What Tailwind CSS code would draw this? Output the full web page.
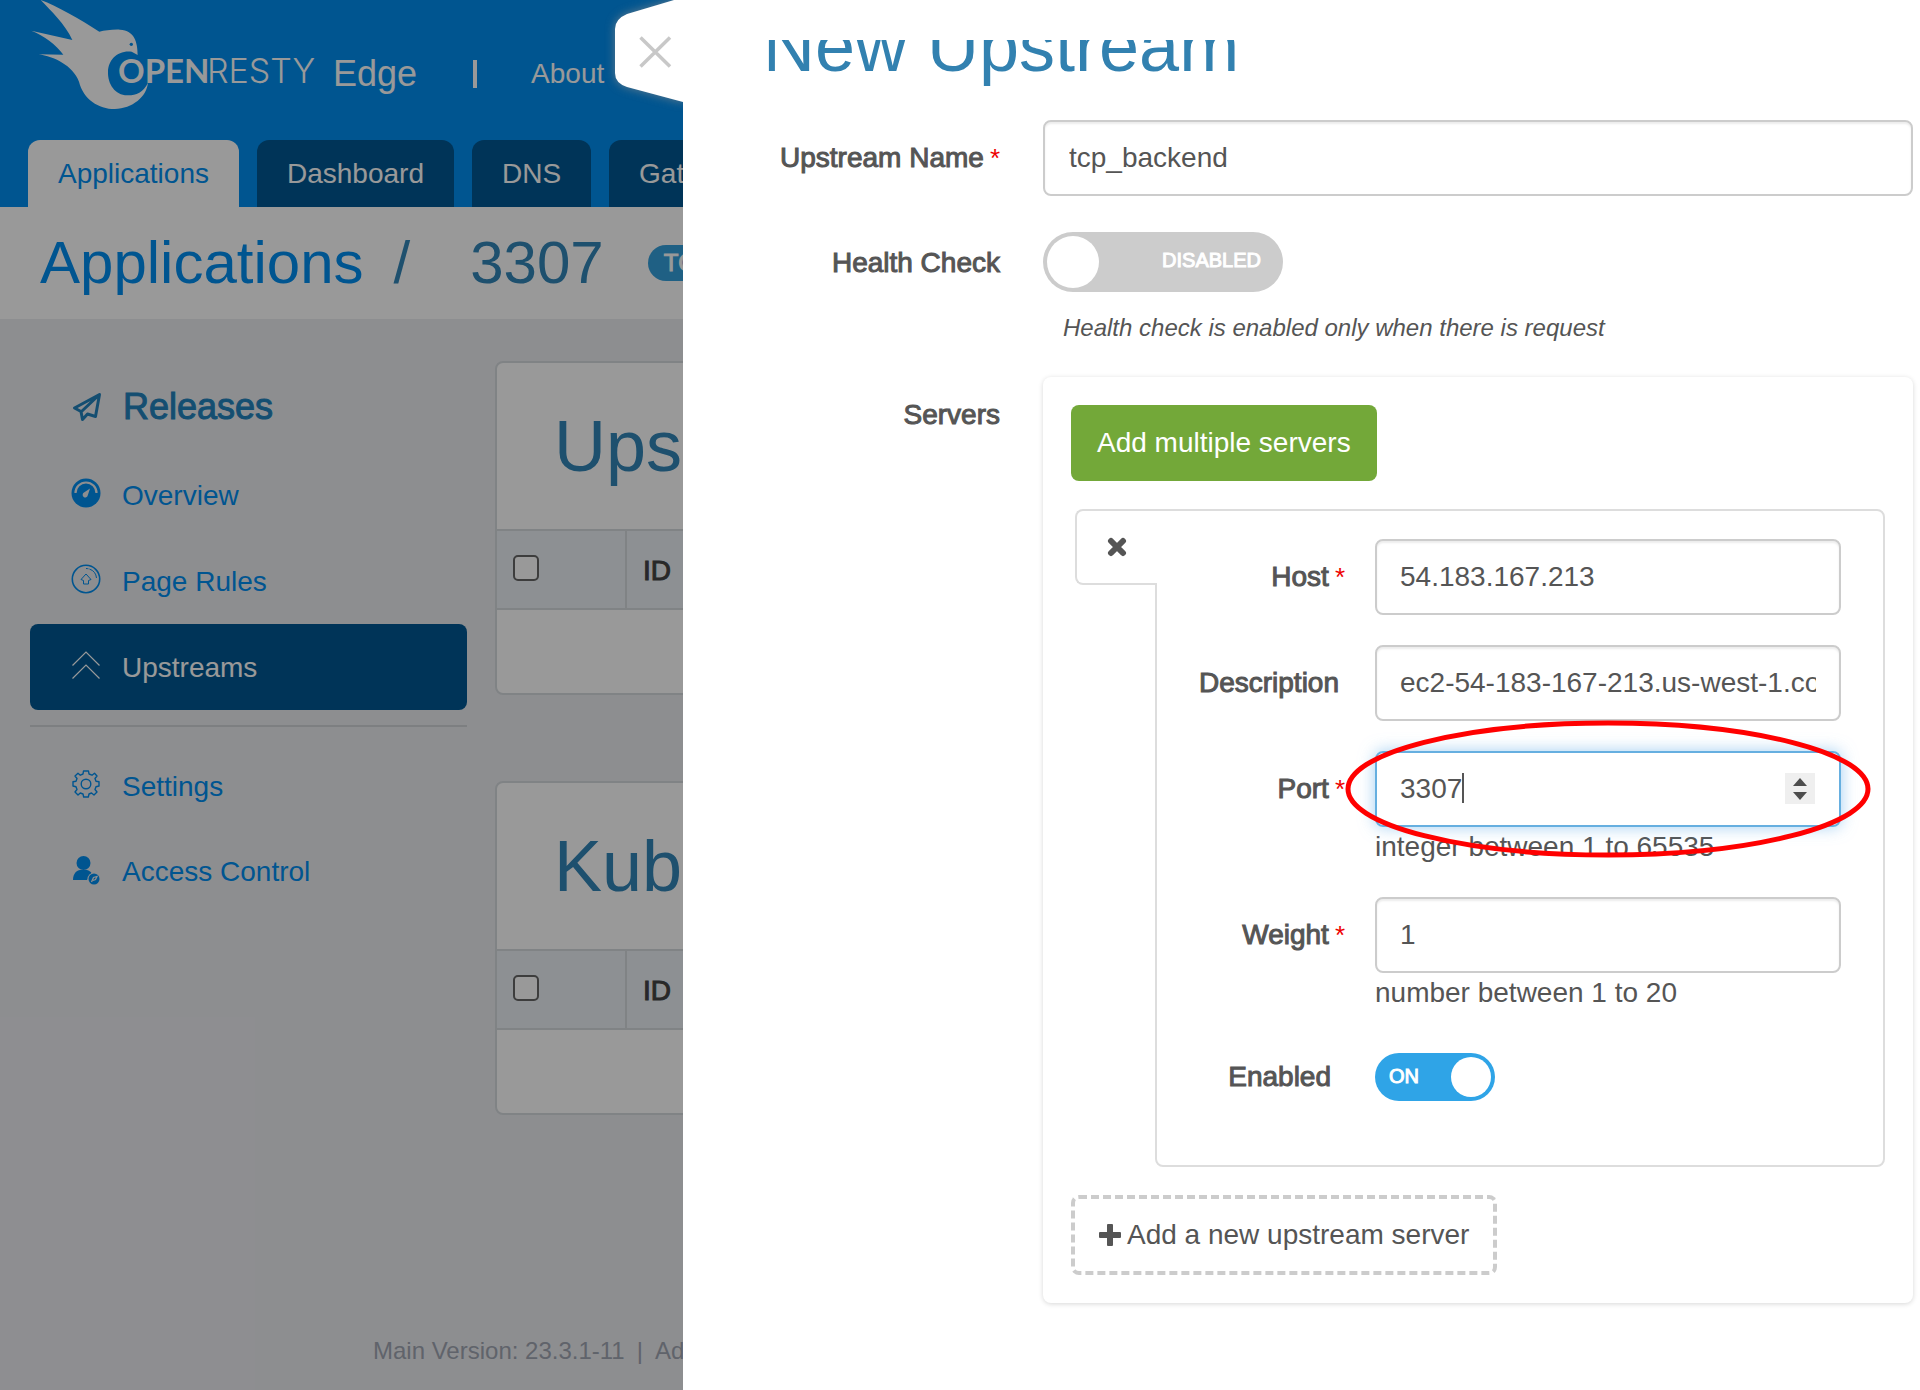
<!DOCTYPE html>
<html lang="en">
<head>
    <meta charset="UTF-8">
    <meta name="viewport" content="width=device-width, initial-scale=1.0">
    <title>OpenResty Edge - New Upstream</title>
    <script src="https://cdn.jsdelivr.net/npm/@tailwindcss/browser@4"></script>
</head>
<body class="relative min-h-screen overflow-x-hidden bg-[#ecedf1] font-['Liberation_Sans',Arial,sans-serif] text-[28px] leading-8 text-[#555]">

    <!-- Application page -->
    <div class="flex min-h-screen flex-col">

        <header class="bg-[#008ef0] text-white">
            <div class="flex h-[140px] pl-5">
                <svg class="h-[130px] w-[310px] shrink-0" viewBox="0 0 310 130" role="img" aria-label="OpenResty">
                    <g transform="scale(.33333)">
                        <path fill="#fff" d="M62 0C92 32 135 72 157 120L34 92C72 106 110 136 130 164L56 163C102 170 158 196 177 245C190 298 236 327 284 327C338 325 380 290 384 248C370 278 345 287 322 286C285 285 263 252 264 215C265 180 292 150 335 155L353 165C353 128 344 91 300 89C276 88 254 92 238 95C180 58 112 18 62 0Z"/>
                        <circle cx="334" cy="133" r="5" fill="#008ef0"/>
                    </g>
                    <text x="98" y="83" fill="#fff" class="font-['Lato',sans-serif] text-[33px] font-bold">OPEN</text>
                    <text x="187" y="83" fill="#fff" class="font-['Inter',sans-serif] text-[34px] font-light">RESTY</text>
                </svg>
                <div class="flex items-center pt-2">
                    <span class="ml-[3px] text-[36px] leading-10">Edge</span>
                    <span class="ml-[56px] h-7 w-1 bg-white"></span>
                    <a href="#" class="ml-[54px]">About</a>
                </div>
            </div>
            <nav class="flex gap-[18px] overflow-hidden pl-7">
                <a href="#" class="flex h-[67px] items-center rounded-t-xl bg-white px-[30px] text-[#008ef0]">Applications</a>
                <a href="#" class="flex h-[67px] items-center rounded-t-xl bg-[#005893] px-[30px]">Dashboard</a>
                <a href="#" class="flex h-[67px] items-center rounded-t-xl bg-[#005893] px-[30px]">DNS</a>
                <a href="#" class="flex h-[67px] items-center rounded-t-xl bg-[#005893] px-[30px]">Gateway</a>
            </nav>
        </header>

        <div class="flex h-[112px] items-center bg-white pl-10 text-[60px] leading-[64px] text-[#3285b7]">
            <a href="#" class="text-[#008ef0]">Applications</a>
            <span class="ml-[30px]">/</span>
            <span class="ml-[60px]">3307</span>
            <span class="ml-[44px] rounded-full bg-[#35a0dc] px-4 text-[24px] leading-9 text-white [-webkit-text-stroke:1px_currentColor]">TCP</span>
        </div>

        <div class="flex flex-1 gap-7 pr-[30px] pl-[30px]">
            <!-- Side menu -->
            <aside class="w-[437px] shrink-0 pt-[42px] text-[#008ef0]">
                <a href="#" class="flex h-[91px] items-center gap-[21px] pl-[42px] text-[36px] text-[#2283bd] [-webkit-text-stroke:1px_currentColor]">
                    <svg class="h-[30px] w-[30px]" viewBox="0 0 30 30" fill="none" stroke="currentColor" stroke-width="3" stroke-linejoin="round" aria-hidden="true"><path d="M27.500 2.500L2.500 16L9 19.500L10.500 27.500L15.500 22L23.500 24.500ZM27.500 2.500L9.500 19.500"/></svg>
                    <span>Releases</span>
                </a>
                <a href="#" class="flex h-[86px] items-center gap-[21px] pt-0.5 pl-[41px]">
                    <svg class="mb-1.5 h-[30px] w-[30px]" viewBox="0 0 30 30" aria-hidden="true"><circle cx="15" cy="15" r="14.500" fill="currentColor"/><path d="M4.500 15A10.500 10.500 0 0 1 25.500 15" fill="none" stroke="#ecedf1" stroke-width="2.200"/><path d="M19 10.500L16.800 17.200A2.600 2.600 0 1 1 13 14.500Z" fill="#ecedf1"/></svg>
                    <span>Overview</span>
                </a>
                <a href="#" class="flex h-[86px] items-center gap-[21px] pt-0.5 pl-[41px]">
                    <svg class="mb-1.5 h-[30px] w-[30px]" viewBox="0 0 30 30" fill="none" stroke="currentColor" aria-hidden="true"><circle cx="15" cy="15" r="13.700" stroke-width="1.600"/><path d="M15 4.500A10.500 10.500 0 0 1 25.500 14" stroke-dasharray="2.500 1 20" /><path d="M15 10L20 15.500L17.500 16.500V20H12.500V16.500L10 15.500Z" stroke-linejoin="round"/></svg>
                    <span>Page Rules</span>
                </a>
                <a href="#" class="flex h-[86px] items-center gap-[21px] rounded-lg bg-[#005893] pt-0.5 pl-[41px] text-white">
                    <svg class="mb-1.5 h-[30px] w-[30px]" viewBox="0 0 30 30" fill="none" stroke="currentColor" stroke-width="1.200" aria-hidden="true"><path d="M1.500 15.500L15 2L28.500 15.500M1.500 28.500L15 15L28.500 28.500"/></svg>
                    <span>Upstreams</span>
                </a>
                <hr class="mt-[15px] mb-4 border-t-2 border-[#d0d4d8]">
                <a href="#" class="flex h-[86px] items-center gap-[21px] pt-0.5 pl-[41px]">
                    <svg class="mb-1.5 h-[30px] w-[30px]" viewBox="0 0 30 30" fill="none" stroke="currentColor" stroke-width="1.400" stroke-linejoin="round" aria-hidden="true"><path d="M12.500 2H17.500L18 5L21 6.200L23.500 4.300L26 7L24 9.500L25 12.300L28 12.800V17L25 17.700L24 20.500L26 23L23 26L20.500 24L18 25L17.300 28H12.700L12 25L9.300 24L7 26L4 23L6 20.500L5 17.700L2 17V12.800L5 12.300L6 9.500L4 7L7 4.300L9.300 6.200L12 5Z"/><circle cx="15" cy="15" r="4.800"/></svg>
                    <span>Settings</span>
                </a>
                <a href="#" class="flex h-[86px] items-center gap-[21px] pl-[41px]">
                    <svg class="mb-1 h-[30px] w-[30px]" viewBox="0 0 30 30" aria-hidden="true"><circle cx="12.500" cy="8" r="7" fill="currentColor"/><path d="M2 25C2 18 6 15.500 9 15H16C18 15.500 19.500 16.500 20.500 18L16 25Z" fill="currentColor"/><circle cx="23" cy="24" r="6.500" fill="#ecedf1"/><circle cx="23" cy="24" r="5.500" fill="currentColor"/><path d="M20.500 27L22.500 22.500L26 21.500L24.500 24.500L22 25.500" fill="none" stroke="#ecedf1" stroke-width="1.300"/></svg>
                    <span>Access Control</span>
                </a>
            </aside>

            <!-- Upstream tables -->
            <main class="flex min-w-0 flex-1 flex-col gap-[86px] pt-[42px]">
                <section class="overflow-hidden rounded-lg border-2 border-[#d5dade] bg-white">
                    <h2 class="flex h-[166px] items-center pl-[57px] text-[72px] leading-[72px] text-[#3285b7]">Upstreams</h2>
                    <table class="w-full border-collapse text-left">
                        <thead>
                            <tr class="h-[79px] border-y-2 border-[#d5dade] bg-[#ebf1f5] text-[#444]">
                                <th class="w-[129px] border-r-2 border-[#d5dade] pb-1 pl-4"><input type="checkbox" aria-label="Select all upstreams" class="block h-[26px] w-[26px] appearance-none rounded-[5px] border-2 border-[#666] bg-white"></th>
                                <th class="px-4 pt-0.5 font-normal [-webkit-text-stroke:1px_currentColor]">ID</th>
                            </tr>
                        </thead>
                        <tbody><tr class="h-[84px]"><td colspan="2"></td></tr></tbody>
                    </table>
                </section>
                <section class="overflow-hidden rounded-lg border-2 border-[#d5dade] bg-white">
                    <h2 class="flex h-[166px] items-center pl-[57px] text-[72px] leading-[72px] text-[#3285b7]">Kubernetes</h2>
                    <table class="w-full border-collapse text-left">
                        <thead>
                            <tr class="h-[79px] border-y-2 border-[#d5dade] bg-[#ebf1f5] text-[#444]">
                                <th class="w-[129px] border-r-2 border-[#d5dade] pb-1 pl-4"><input type="checkbox" aria-label="Select all Kubernetes upstreams" class="block h-[26px] w-[26px] appearance-none rounded-[5px] border-2 border-[#666] bg-white"></th>
                                <th class="px-4 pt-0.5 font-normal [-webkit-text-stroke:1px_currentColor]">ID</th>
                            </tr>
                        </thead>
                        <tbody><tr class="h-[84px]"><td colspan="2"></td></tr></tbody>
                    </table>
                </section>
            </main>
        </div>

        <footer class="flex gap-3 pb-[23px] pl-[373px] text-[24px] leading-8 text-[#a0a6b2]">
            <span>Main Version: 23.3.1-11</span><span>|</span><span>Admin Version: 23.3.1-11</span>
        </footer>
    </div>

    <!-- Backdrop -->
    <div class="absolute inset-0 bg-black/40"></div>

    <!-- Drawer -->
    <div role="dialog" aria-label="New Upstream" class="absolute inset-y-0 right-0 left-[683px] bg-white pt-10">
        <button type="button" aria-label="Close" class="absolute top-0 -left-[68px] h-[104px] w-[70px] [clip-path:inset(-20px_2px_-20px_-20px)]">
            <svg class="h-[104px] w-[70px] overflow-visible drop-shadow-[0_0_5px_rgba(140,140,140,0.7)]" viewBox="0 0 70 104" aria-hidden="true"><path fill="#fff" d="M70 -4L59 0L12 14Q0 19 0 29V73Q0 83 12 87L68 102H70Z"/><path d="M25.500 37.500L55 66.500M55 37.500L25.500 66.500" stroke="#c8c8c8" stroke-width="3.500"/></svg>
        </button>

        <form class="overflow-hidden pr-[7px] pb-20">
            <h1 class="-mt-[30px] mb-[38px] pl-20 text-[72px] leading-[72px] text-[#3281b0]">New Upstream</h1>

            <div class="flex gap-[43px]">
                <label for="upstream-name" class="flex h-[76px] w-[317px] shrink-0 items-center justify-end gap-1.5 [-webkit-text-stroke:1px_currentColor]">Upstream Name <span class="text-[26px] text-[#e00] [-webkit-text-stroke:0]">*</span></label>
                <input id="upstream-name" type="text" value="tcp_backend" class="h-[76px] min-w-0 flex-1 rounded-lg border-2 border-[#ccc] px-6 shadow-[inset_0_2px_2px_rgba(0,0,0,0.075)]">
            </div>

            <div class="mt-9 flex gap-[43px]">
                <label for="health-check" class="flex h-[60px] w-[317px] shrink-0 items-center justify-end pt-0.5 [-webkit-text-stroke:1px_currentColor]">Health Check</label>
                <div>
                    <label class="flex h-[60px] w-60 items-center justify-between rounded-full bg-[#ccc] pr-[22px] pl-1">
                        <input id="health-check" type="checkbox" role="switch" class="h-[52px] w-[52px] appearance-none rounded-full bg-white">
                        <span class="pb-1 text-[20px] leading-6 text-white [-webkit-text-stroke:1px_currentColor]">DISABLED</span>
                    </label>
                    <p class="mt-5 pl-5 text-[24px] italic">Health check is enabled only when there is request</p>
                </div>
            </div>

            <div class="mt-[33px] flex gap-[43px]">
                <span class="flex h-[76px] w-[317px] shrink-0 items-center justify-end [-webkit-text-stroke:1px_currentColor]">Servers</span>
                <div class="min-w-0 flex-1 rounded-lg p-7 shadow-[0_1px_5px_rgba(0,0,0,0.16)]">
                    <button type="button" class="block h-[76px] rounded-lg bg-[#73a839] px-[26px] text-white">Add multiple servers</button>

                    <!-- Server entry -->
                    <div class="mt-7 ml-1 flex">
                        <button type="button" aria-label="Remove server" class="relative z-10 -mr-0.5 flex h-[76px] w-[82px] shrink-0 items-center justify-center rounded-l-lg border-2 border-r-0 border-[#ddd] bg-white">
                            <svg class="h-5 w-5" viewBox="0 0 20 20" stroke="#555" stroke-width="6" stroke-linecap="round" aria-hidden="true"><path d="M4 4L16 16M16 4L4 16"/></svg>
                        </button>
                        <div class="min-w-0 flex-1 rounded-r-lg rounded-bl-lg border-2 border-[#ddd] pt-7 pr-[42px] pb-16">
                            <div class="flex gap-[30px]">
                                <label for="host" class="flex h-[76px] w-[188px] shrink-0 items-center justify-end gap-1.5 [-webkit-text-stroke:1px_currentColor]">Host <span class="text-[26px] text-[#e00] [-webkit-text-stroke:0]">*</span></label>
                                <input id="host" type="text" value="54.183.167.213" class="h-[76px] min-w-0 flex-1 rounded-lg border-2 border-[#ccc] px-[23px] shadow-[inset_0_2px_2px_rgba(0,0,0,0.075)]">
                            </div>
                            <div class="mt-[30px] flex gap-[30px]">
                                <label for="description" class="flex h-[76px] w-[188px] shrink-0 items-center justify-end pr-1.5 [-webkit-text-stroke:1px_currentColor]">Description</label>
                                <input id="description" type="text" value="ec2-54-183-167-213.us-west-1.compute.amazonaws.com" class="h-[76px] min-w-0 flex-1 rounded-lg border-2 border-[#ccc] px-[23px] shadow-[inset_0_2px_2px_rgba(0,0,0,0.075)]">
                            </div>
                            <div class="relative mt-[30px] flex gap-[30px]">
                                <label for="port" class="flex h-[76px] w-[188px] shrink-0 items-center justify-end gap-1.5 [-webkit-text-stroke:1px_currentColor]">Port <span class="text-[26px] text-[#e00] [-webkit-text-stroke:0]">*</span></label>
                                <div class="min-w-0 flex-1">
                                    <div class="relative">
                                        <input id="port" type="number" value="3307" min="1" max="65535" class="h-[76px] w-full appearance-none rounded-lg border-2 border-[#66afe0] px-[23px] shadow-[0_0_16px_rgba(102,175,233,0.6)] [-moz-appearance:textfield] [&::-webkit-inner-spin-button]:appearance-none">
                                        <span class="absolute top-[22px] left-[87px] h-[30px] w-0.5 bg-[#555]"></span>
                                        <span class="absolute top-[22px] right-[26px] flex h-[31px] w-[30px] flex-col items-center justify-center gap-1.5 bg-[#efefef]">
                                            <button type="button" aria-label="Increase port" class="block"><svg class="block h-2 w-3.5" viewBox="0 0 14 8" fill="#4d4d4d"><path d="M7 0L14 8H0Z"/></svg></button>
                                            <button type="button" aria-label="Decrease port" class="block"><svg class="block h-2 w-3.5" viewBox="0 0 14 8" fill="#4d4d4d"><path d="M7 8L0 0H14Z"/></svg></button>
                                        </span>
                                    </div>
                                    <p class="h-10 leading-10">integer between 1 to 65535</p>
                                </div>
                                <!-- Highlight around the port field -->
                                <svg class="pointer-events-none absolute -top-[31px] -right-[30px] left-[188px] h-[138px] w-[526px]" viewBox="0 0 526 138" preserveAspectRatio="none" fill="none" stroke="#f00" stroke-width="5" aria-hidden="true"><ellipse cx="263" cy="69" rx="260" ry="66"/></svg>
                            </div>
                            <div class="mt-[30px] flex gap-[30px]">
                                <label for="weight" class="flex h-[76px] w-[188px] shrink-0 items-center justify-end gap-1.5 [-webkit-text-stroke:1px_currentColor]">Weight <span class="text-[26px] text-[#e00] [-webkit-text-stroke:0]">*</span></label>
                                <div class="min-w-0 flex-1">
                                    <input id="weight" type="text" inputmode="numeric" value="1" class="block h-[76px] w-full rounded-lg border-2 border-[#ccc] px-[23px] shadow-[inset_0_2px_2px_rgba(0,0,0,0.075)]">
                                    <p class="h-10 leading-10">number between 1 to 20</p>
                                </div>
                            </div>
                            <div class="mt-10 flex gap-[30px]">
                                <label for="enabled" class="flex h-12 w-[188px] shrink-0 items-center justify-end pr-3.5 [-webkit-text-stroke:1px_currentColor]">Enabled</label>
                                <label class="flex h-12 w-[120px] items-center justify-between rounded-full bg-[#2fa4e7] pr-1 pl-[14px]">
                                    <span class="pb-0.5 text-[20px] leading-6 text-white [-webkit-text-stroke:1px_currentColor]">ON</span>
                                    <input id="enabled" type="checkbox" role="switch" checked class="h-10 w-10 appearance-none rounded-full bg-white">
                                </label>
                            </div>
                        </div>
                    </div>

                    <button type="button" class="mt-7 flex h-20 items-center gap-1.5 rounded-lg border-4 border-dashed border-[#ccc] px-6">
                        <svg class="h-[22px] w-[22px]" viewBox="0 0 22 22" fill="#555" aria-hidden="true"><path d="M9 0H13Q14 0 14 1V8H21Q22 8 22 9V13Q22 14 21 14H14V21Q14 22 13 22H9Q8 22 8 21V14H1Q0 14 0 13V9Q0 8 1 8H8V1Q8 0 9 0Z"/></svg>
                        Add a new upstream server
                    </button>
                </div>
            </div>
        </form>
    </div>
</body>
</html>
